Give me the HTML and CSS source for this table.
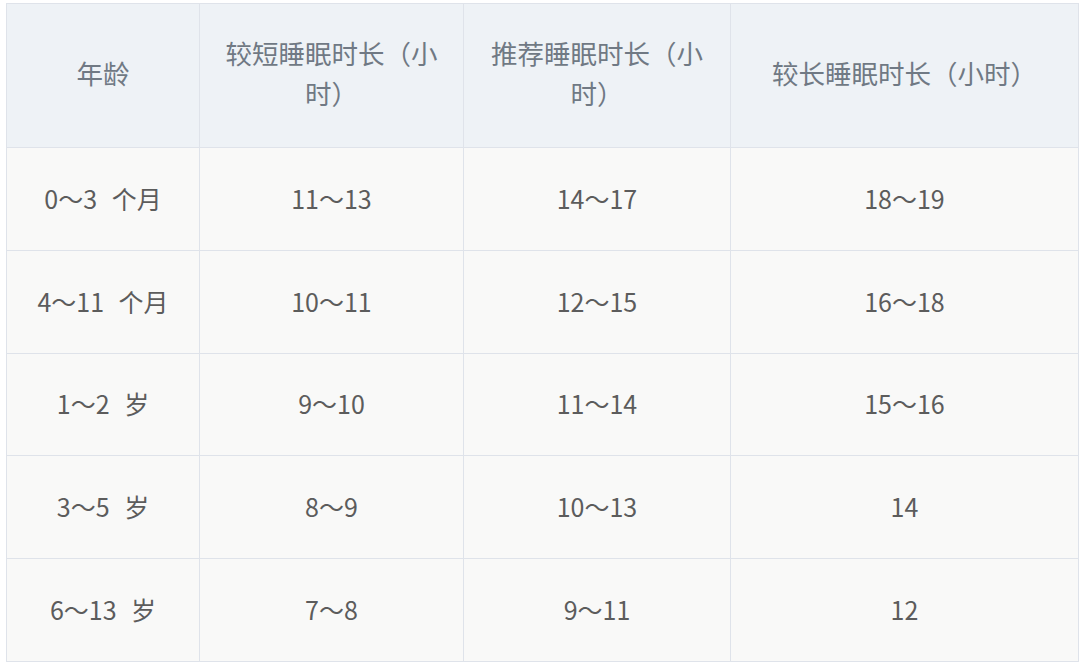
FILE: index.html
```html
<!DOCTYPE html>
<html lang="zh">
<head>
<meta charset="utf-8">
<link rel="stylesheet" href="styles.css">
</head>
<body>
<table class="sleep">
  <colgroup>
    <col class="c1"><col class="c2"><col class="c3"><col class="c4">
  </colgroup>
  <thead>
    <tr>
      <th>年龄</th>
      <th>较短睡眠时长（小时）</th>
      <th>推荐睡眠时长（小时）</th>
      <th>较长睡眠时长（小时）</th>
    </tr>
  </thead>
  <tbody>
    <tr><td>0～3 个月</td><td>11～13</td><td>14～17</td><td>18～19</td></tr>
    <tr><td>4～11 个月</td><td>10～11</td><td>12～15</td><td>16～18</td></tr>
    <tr><td>1～2 岁</td><td>9～10</td><td>11～14</td><td>15～16</td></tr>
    <tr><td>3～5 岁</td><td>8～9</td><td>10～13</td><td>14</td></tr>
    <tr><td>6～13 岁</td><td>7～8</td><td>9～11</td><td>12</td></tr>
  </tbody>
</table>
</body>
</html>
```
FILE: styles.css
```css
html, body {
  margin: 0;
  background: #ffffff;
}
body {
  padding: 3px 0 0 6px;
  font-family: "Noto Sans CJK SC", "Noto Sans", sans-serif;
}
.sleep {
  border-collapse: collapse;
  table-layout: fixed;
  width: 1072px;
}
.c1 { width: 193px; }
.c2 { width: 264px; }
.c3 { width: 267px; }
.c4 { width: 348px; }
.sleep th, .sleep td {
  border: 1px solid #dfe3ea;
  text-align: center;
  vertical-align: middle;
  padding: 0 20px;
}
.sleep th {
  background: #eef2f6;
  color: #707984;
  font-weight: normal;
  font-size: 26.5px;
  line-height: 40px;
  height: 144px;
  padding-bottom: 6px;
  box-sizing: border-box;
}
.sleep td {
  background: #f9f9f8;
  color: #5c5c5c;
  font-size: 25px;
  line-height: 40px;
  word-spacing: 9px;
  height: 102.8px;
  padding-bottom: 2px;
  box-sizing: border-box;
}
```
